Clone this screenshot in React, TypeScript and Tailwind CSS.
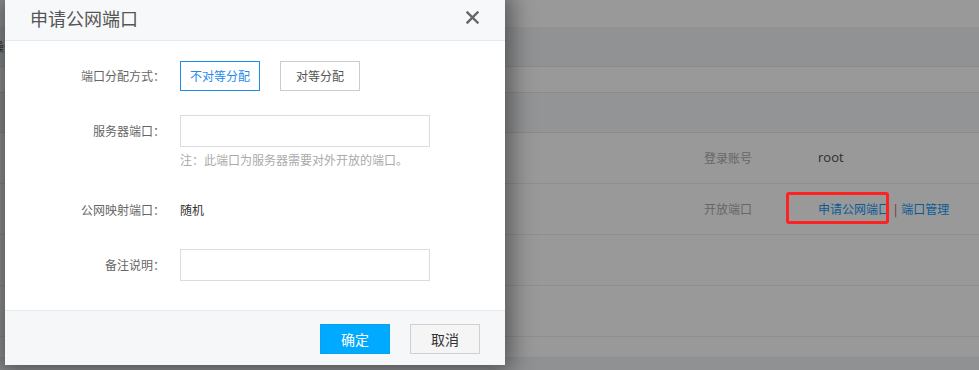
import React from "react";

const font = { fontFamily: '"Noto Sans CJK SC", "Noto Sans", sans-serif' };

export default function App() {
  return (
    <div className="relative w-[979px] h-[370px] overflow-hidden bg-[#999999] text-[12px]" style={font}>
      {/* background page (dimmed) */}
      <div className="flex flex-col">
        <div className="h-[27px] bg-[#999999]" />
        <div className="h-[40px] bg-[#919294] border-b border-[#8a8a8a] flex items-center">
          <span className="ml-[-8px] text-[#3a3a3a]">操作</span>
          <span className="w-px h-[11px] bg-[#6a2a2a]" />
        </div>
        <div className="h-[26px] bg-[#999999] border-b border-[#8a8a8a]" />
        <div className="h-[40px] bg-[#939495] border-b border-[#8a8a8a]" />
        <div className="h-[51px] bg-[#999999] border-b border-[#8e8e8e] flex items-center">
          <span className="ml-[704px] text-[#666666]">登录账号</span>
          <span className="ml-[66px] text-[13px] text-[#2e2e2e]" style={{ fontFamily: '"Open Sans", "Noto Sans", sans-serif' }}>root</span>
        </div>
        <div className="h-[51px] bg-[#999999] border-b border-[#8e8e8e] flex items-center">
          <span className="ml-[704px] text-[#666666]">开放端口</span>
          <div className="ml-[34px] relative flex items-center">
            <div className="absolute left-[0px] top-[-8px] w-[103px] h-[32px] border-[3px] border-[#ff2222] rounded-[3px]" />
            <span className="ml-[32px] text-[#0b5c96]">申请公网端口</span>
            <span className="mx-[4px] text-[#6a2f2f]">|</span>
            <span className="text-[#0b5c96]">端口管理</span>
          </div>
        </div>
        <div className="h-[51px] bg-[#999999] border-b border-[#8e8e8e]" />
        <div className="h-[51px] bg-[#999999] border-b border-[#8e8e8e]" />
        <div className="h-[21px] bg-[#999999] border-b border-[#8e8e8e]" />
        <div className="h-[20px] bg-[#909193]" />
      </div>

      {/* dialog */}
      <div className="absolute left-[5px] top-0 w-[500px] h-[365px] bg-white flex flex-col shadow-[0_0_22px_6px_rgba(0,0,0,0.45)]">
        <div className="h-[41px] bg-[#f7f8fa] border-b border-[#e8eaec] flex items-center justify-between pl-[25px] pr-[26px]">
          <span className="text-[18px] text-[#555555] leading-none mt-[-4px]">申请公网端口</span>
          <svg width="13" height="13" viewBox="0 0 13 13" className="mt-[-6px]">
            <path d="M1.5 1.5 L11.5 11.5 M11.5 1.5 L1.5 11.5" stroke="#666" strokeWidth="2.4" strokeLinecap="square" />
          </svg>
        </div>

        <div className="flex-1 flex flex-col pt-[20px]">
          <div className="flex items-center h-[30px]">
            <div className="w-[160px] text-right text-[#666666]">端口分配方式：</div>
            <div className="ml-[15px] flex gap-[20px]">
              <div className="w-[80px] h-[30px] border border-[#1f8ceb] text-[#1f8ceb] flex items-center justify-center">不对等分配</div>
              <div className="w-[80px] h-[30px] border border-[#cccccc] text-[#555555] flex items-center justify-center">对等分配</div>
            </div>
          </div>

          <div className="flex items-center h-[32px] mt-[24px]">
            <div className="w-[160px] text-right text-[#666666]">服务器端口：</div>
            <div className="ml-[15px] w-[250px] h-[32px] border border-[#dcdcdc] bg-white" />
          </div>
          <div className="ml-[175px] mt-[5px] text-[#aaaaaa] leading-[16px]">注：此端口为服务器需要对外开放的端口。</div>

          <div className="flex items-center h-[20px] mt-[32px]">
            <div className="w-[160px] text-right text-[#666666]">公网映射端口：</div>
            <div className="ml-[15px] text-[#333333]">随机</div>
          </div>

          <div className="flex items-center h-[32px] mt-[29px]">
            <div className="w-[160px] text-right text-[#666666]">备注说明：</div>
            <div className="ml-[15px] w-[250px] h-[32px] border border-[#dcdcdc] bg-white" />
          </div>
        </div>

        <div className="h-[55px] bg-[#f5f7f8] border-t border-[#e6e9ec] flex items-start justify-end pr-[25px] pt-[13px] gap-[20px]">
          <div className="w-[70px] h-[30px] bg-[#00aaff] border border-[#0aa0ee] text-white text-[14px] flex items-center justify-center">确定</div>
          <div className="w-[70px] h-[30px] bg-[#f5f5f5] border border-[#d0d0d0] text-[#333333] text-[14px] flex items-center justify-center">取消</div>
        </div>
      </div>
    </div>
  );
}
